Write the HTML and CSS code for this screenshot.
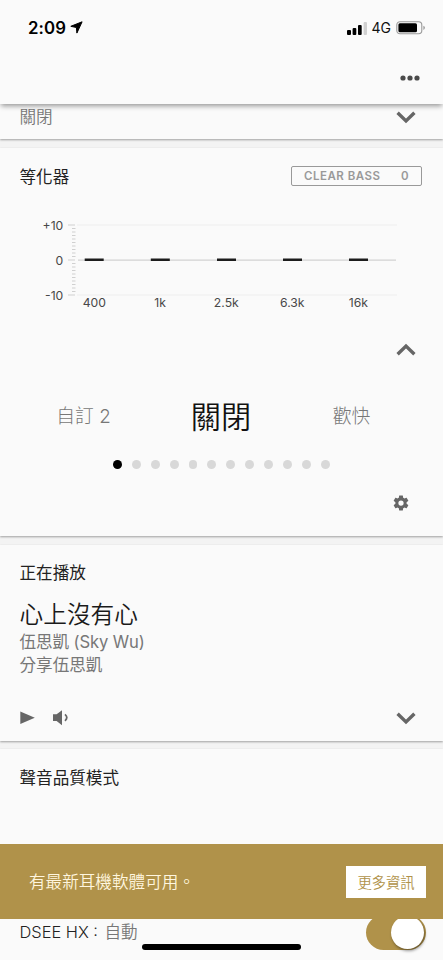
FILE: index.html
```html
<!DOCTYPE html>
<html lang="zh-Hant">
<head>
<meta charset="utf-8">
<title>等化器</title>
<link rel="stylesheet" href="styles.css">
</head>
<body>
<div class="screen">
  <header class="header">
    <div class="status">
      <div class="clock"><span>2:09</span>
        <svg class="location" width="13" height="13" viewBox="0 0 13 13"><path d="M12.1.8.8 5.3l5.6 1.2.5 5.6z" fill="#000" stroke="#000" stroke-width="1" stroke-linejoin="round"/></svg>
      </div>
      <div class="signals">
        <svg width="20" height="13" viewBox="0 0 20 13"><rect y="8" width="4" height="5" rx="1"/><rect x="5.6" y="6" width="3.7" height="7" rx="1"/><rect x="11" y="3" width="3.7" height="10" rx="1"/><rect x="16.6" y="0" width="3.4" height="13" rx="1" fill="#d0d0d0"/></svg>
        <span class="network">4G</span>
        <svg width="30" height="14" viewBox="0 0 30 14"><rect x=".8" y=".8" width="25" height="12" rx="3.2" fill="none" stroke="#999" stroke-width="1.1"/><rect x="2.4" y="2.3" width="18.6" height="9" rx="1.5"/><path d="M27.4 4.7q1.5.6 1.5 2.1t-1.5 2.1z" fill="#999"/></svg>
      </div>
    </div>
    <div class="toolbar">
      <svg width="20" height="6" viewBox="0 0 20 6" fill="#4a4a4a"><circle cx="3" cy="3" r="2.6"/><circle cx="10" cy="3" r="2.6"/><circle cx="17" cy="3" r="2.6"/></svg>
    </div>
  </header>

  <main class="cards">
    <section class="card card-first">
      <span class="muted">關閉</span>
      <svg class="chevron" width="20" height="13" viewBox="0 0 20 13"><path d="m1.6 1.7 8.4 8.2 8.4-8.2"/></svg>
    </section>

    <section class="card card-eq">
      <div class="eq-head">
        <h2 class="title">等化器</h2>
        <div class="bass"><span>CLEAR BASS</span><span>0</span></div>
      </div>
      <svg class="chart" width="443" height="100" viewBox="0 0 443 100">
        <g class="grid-light"><path d="M77 14H397M77 84H397"/></g>
        <path class="grid-zero" d="M78 49.2H396"/>
        <g class="ticks">
          <path d="M68 14h7M68 49h7M68 84h7"/>
          <path d="M72 17.5h3.5M72 21h3.5M72 24.5h3.5M72 28h3.5M72 31.5h3.5M72 35h3.5M72 38.5h3.5M72 42h3.5M72 45.5h3.5M72 52.5h3.5M72 56h3.5M72 59.5h3.5M72 63h3.5M72 66.5h3.5M72 70h3.5M72 73.5h3.5M72 77h3.5M72 80.5h3.5"/>
        </g>
        <path class="levels" d="M84.7 48.8h19M150.8 48.8h19M217 48.8h19M283 48.8h19M349 48.8h19"/>
        <g class="axis" text-anchor="end"><text x="63.3" y="19">+10</text><text x="63.3" y="53.5">0</text><text x="63.3" y="88.6">-10</text></g>
        <g class="axis" text-anchor="middle"><text x="94.3" y="96">400</text><text x="160.2" y="96">1k</text><text x="226.3" y="96">2.5k</text><text x="292.3" y="96">6.3k</text><text x="358.3" y="96">16k</text></g>
      </svg>
      <div class="collapse"><svg class="chevron" width="20" height="13" viewBox="0 0 20 13"><path d="m1.6 11.3 8.4-8.2 8.4 8.2"/></svg></div>
      <div class="presets">
        <span class="preset">自訂 2</span>
        <span class="preset current">關閉</span>
        <span class="preset">歡快</span>
      </div>
      <div class="dots"><i class="on"></i><i></i><i></i><i></i><i></i><i></i><i></i><i></i><i></i><i></i><i></i><i></i></div>
      <div class="settings">
        <svg width="18" height="18" viewBox="0 0 24 24" fill="#666"><path d="M19.43 12.98c.04-.32.07-.64.07-.98s-.03-.66-.07-.98l2.11-1.65c.19-.15.24-.42.12-.64l-2-3.46c-.12-.22-.39-.3-.61-.22l-2.49 1c-.52-.4-1.08-.73-1.69-.98l-.38-2.65C14.46 2.18 14.25 2 14 2h-4c-.25 0-.46.18-.49.42l-.38 2.65c-.61.25-1.17.59-1.69.98l-2.49-1c-.23-.09-.49 0-.61.22l-2 3.46c-.13.22-.07.49.12.64l2.11 1.65c-.04.32-.07.65-.07.98s.03.66.07.98l-2.11 1.65c-.19.15-.24.42-.12.64l2 3.46c.12.22.39.3.61.22l2.49-1c.52.4 1.08.73 1.69.98l.38 2.65c.03.24.24.42.49.42h4c.25 0 .46-.18.49-.42l.38-2.65c.61-.25 1.17-.59 1.69-.98l2.49 1c.23.09.49 0 .61-.22l2-3.46c.12-.22.07-.49-.12-.64zM12 15.5a3.5 3.5 0 1 1 0-7 3.5 3.5 0 0 1 0 7z"/></svg>
      </div>
    </section>

    <section class="card card-playing">
      <h2 class="title">正在播放</h2>
      <p class="song">心上沒有心</p>
      <p class="muted line artist">伍思凱 (Sky Wu)</p>
      <p class="muted line">分享伍思凱</p>
      <div class="controls">
        <svg width="15" height="14" viewBox="0 0 15 14" fill="#666"><path d="M.3.6 14.8 6.8.3 13z"/></svg>
        <svg class="volume" width="16" height="16" viewBox="0 0 16 16"><path d="M0 4.3h3.6L9 .3v15l-5.4-4.4H0z" fill="#666"/><path d="M12 4.4q3.6 3.2 0 6.4" fill="none" stroke="#666" stroke-width="1.8"/></svg>
        <svg class="chevron" width="20" height="13" viewBox="0 0 20 13"><path d="m1.6 1.7 8.4 8.2 8.4-8.2"/></svg>
      </div>
    </section>

    <section class="card card-quality">
      <h2 class="title">聲音品質模式</h2>
      <div class="dsee"><span class="dsee-name">DSEE HX :</span><span class="muted">自動</span>
        <span class="switch"><span class="knob"></span></span>
      </div>
    </section>
  </main>

  <aside class="banner">
    <span class="message">有最新耳機軟體可用。</span>
    <button class="more">更多資訊</button>
  </aside>
  <div class="home"></div>
</div>
</body>
</html>
```
FILE: styles.css
```css
* { box-sizing: border-box; }
body { margin: 0; }
h2, p { margin: 0; font-weight: 400; }
.screen {
  position: relative;
  width: 443px;
  height: 960px;
  overflow: hidden;
  background: #f3f3f3;
  color: #222;
  font: 350 16.6px/24px Inter, "Noto Sans CJK TC", sans-serif;
}
.header {
  position: relative;
  z-index: 2;
  height: 104px;
  background: #fafafa;
  box-shadow: 0 3px 5px -1px rgba(0, 0, 0, .4);
}
.status {
  display: flex;
  justify-content: space-between;
  align-items: center;
  height: 56px;
  padding: 0 17px 0 28px;
}
.clock { display: flex; align-items: center; gap: 4px; color: #000; font-size: 16.8px; font-weight: 600; letter-spacing: .1px; }
.location { margin-bottom: 1px; }
.signals { display: flex; align-items: center; gap: 5px; color: #111; }
.network { font-size: 14px; font-weight: 400; }
.toolbar { display: flex; justify-content: flex-end; padding: 19px 23px 0 0; }
.cards { display: flex; flex-direction: column; gap: 9px; }
.card { background: #fafafa; box-shadow: 0 1px 2px rgba(0, 0, 0, .34); }
.muted { color: #777; }
.chevron { fill: none; stroke: #666; stroke-width: 3.4; stroke-linecap: butt; }
.card-first { display: flex; justify-content: space-between; height: 35px; padding: 1px 27px 0 19.5px; }
.card-first .chevron { margin-top: 6px; }
.card-eq { height: 388px; }
.eq-head { display: flex; justify-content: space-between; align-items: center; height: 56px; padding: 0 21px 0 19.5px; }
.title { font-size: 16.6px; font-weight: 400; line-height: 24px; }
.eq-head .title { padding-top: 1px; }
.bass {
  display: flex;
  justify-content: space-between;
  align-items: center;
  width: 131px;
  height: 20px;
  padding: 0 12px;
  border: 1px solid #999;
  border-radius: 2px;
  color: #999;
  font-size: 11.5px;
  font-weight: 600;
  letter-spacing: .5px;
}
.chart { display: block; margin-top: 7px; }
.grid-light { stroke: #eee; }
.grid-zero { stroke: #d2d2d2; stroke-width: 1.3; }
.ticks { stroke: #d0d0d0; }
.levels { stroke: #1c1c1c; stroke-width: 2.4; }
.axis { fill: #484848; font-size: 12.2px; font-weight: 400; }
.collapse { display: flex; justify-content: flex-end; padding: 32px 27px 0 0; }
.presets {
  display: grid;
  grid-template-columns: 137px 138px 123px;
  align-items: center;
  height: 54px;
  margin-top: 33px;
  padding-left: 15px;
  text-align: center;
}
.preset { padding-top: 1px; color: #777; font-size: 18.8px; font-weight: 300; }
.current { color: #111; font-size: 30.2px; font-weight: 350; }
.dots { display: flex; gap: 10px; padding: 17px 0 0 113px; }
.dots i { width: 8.9px; height: 9px; border-radius: 50%; background: #d8d8d8; }
.dots .on { background: #000; }
.settings { display: flex; justify-content: flex-end; padding: 25px 33px 0 0; }
.card-playing { height: 196px; padding: 16px 27px 0 19.5px; }
.song { margin-top: 13px; color: #1a1a1a; font-size: 23.7px; font-weight: 350; line-height: 34px; }
.line { line-height: 23px; }
.artist { margin-top: -1px; letter-spacing: -.1px; }
.controls { display: flex; align-items: center; gap: 18.5px; height: 16px; margin-top: 33px; }
.controls .chevron { margin-left: auto; }
.card-quality { height: 211px; margin-top: -1px; padding: 17px 17px 0 19.5px; }
.dsee { display: flex; align-items: center; height: 36px; margin-top: 124px; }
.dsee-name { width: 85px; font-size: 16.4px; letter-spacing: 0; white-space: nowrap; }
.switch { display: flex; justify-content: flex-end; width: 60px; height: 35px; margin-left: auto; padding: 1px 2px; border-radius: 18px; background: #b0924a; }
.knob { width: 33px; height: 33px; border-radius: 50%; background: #fff; box-shadow: 1px 2px 3px rgba(0, 0, 0, .4); }
.banner {
  position: absolute;
  z-index: 3;
  left: 0;
  right: 0;
  top: 844px;
  display: flex;
  justify-content: space-between;
  align-items: center;
  height: 75px;
  padding: 0 17px 0 29px;
  background: #b0924a;
}
.message { color: #fff6df; }
.more { width: 80px; height: 32px; padding: 0 0 1px; border: 0; background: #fff; color: #b0924a; font: 350 14.3px/31px "Noto Sans CJK TC", sans-serif; }
.home { position: absolute; z-index: 4; left: 142px; top: 944px; width: 159px; height: 6px; border-radius: 3px; background: #000; }
```
